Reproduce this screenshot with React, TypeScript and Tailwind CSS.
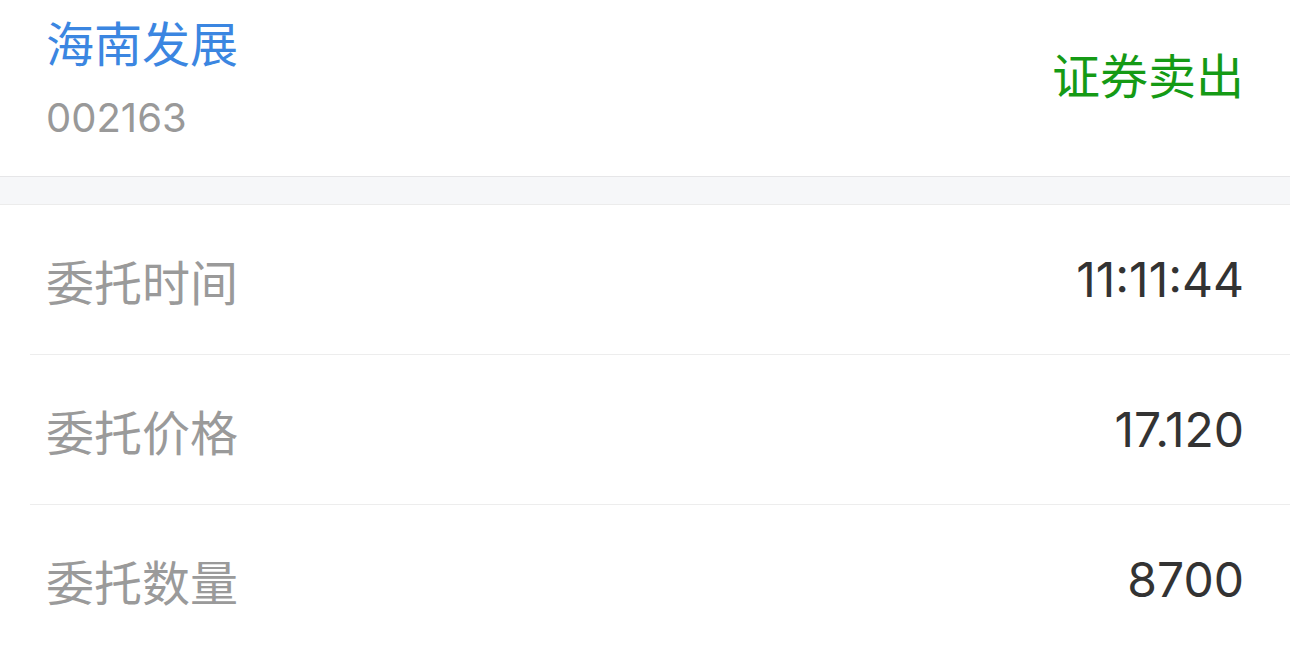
const cjk = { fontFamily: '"PingFang SC", "Noto Sans CJK SC", "Noto Sans", sans-serif' };
const num = { fontFamily: 'Inter, "Liberation Sans", "Noto Sans CJK SC", sans-serif' };

const rows = [
  { label: '委托时间', value: '11:11:44' },
  { label: '委托价格', value: '17.120' },
  { label: '委托数量', value: '8700' },
];

export default function App() {
  return (
    <div className="w-[1290px] h-[652px] overflow-hidden bg-white" style={cjk}>
      {/* header */}
      <div className="h-[177px] flex items-center justify-between px-[46px] border-b border-[#e6e6e8]">
        <div className="flex flex-col -mt-[24px]">
          <div className="text-[48px] leading-[56px] text-[#3b86e1]">海南发展</div>
          <div className="text-[40px] leading-[44px] text-[#999999] mt-[27px]" style={num}>
            002163
          </div>
        </div>
        <div className="text-[48px] leading-[56px] text-[#159a15] -mt-[30px]">证券卖出</div>
      </div>
      <div className="h-[28px] bg-[#f6f7f9] border-b border-[#ececec]" />
      {rows.map((r, i) => (
        <div key={r.label} className="pl-[30px]">
          <div
            className={
              'h-[150px] flex items-center justify-between pl-[16px] pr-[46px] ' +
              (i < rows.length - 1 ? 'border-b border-[#ededed]' : '')
            }
          >
            <span className="text-[48px] text-[#9a9a9a]">{r.label}</span>
            <span className="text-[48px] text-[#333333]" style={num}>
              {r.value}
            </span>
          </div>
        </div>
      ))}
    </div>
  );
}
